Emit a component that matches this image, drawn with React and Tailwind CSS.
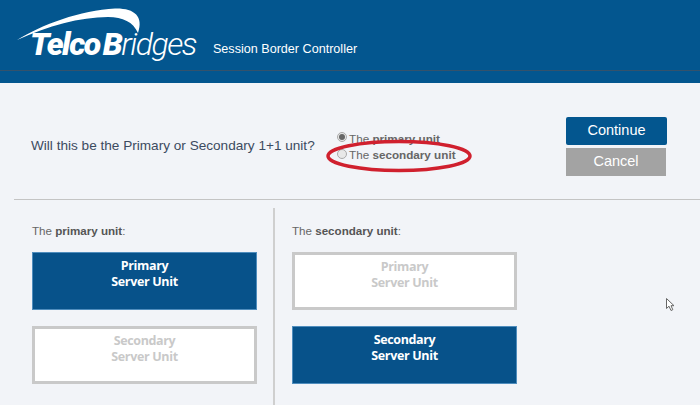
function ServerUnit({ top, bottom, active }) {
  return (
    <div
      className={`h-[58px] w-[225px] flex flex-col items-center text-[12.5px] leading-[16px] tracking-[-0.35px] font-bold font-['Open_Sans',sans-serif] ${
        active
          ? 'pt-[5px] bg-[#07528a] border border-[#4f8dbd] text-white'
          : 'pt-[4px] bg-white border-[3px] border-[#c9c9c9] text-[#c9c9c9]'
      }`}
    >
      <span>{top}</span>
      <span>{bottom}</span>
    </div>
  )
}

function UnitColumn({ name, primaryActive }) {
  return (
    <div className="flex flex-col gap-[16px]">
      <p className="h-[28px] text-[11.6px] leading-[16px] pt-[7px] -mb-[8px] text-[#666]">
        The <b className="text-[#555]">{name} unit</b>:
      </p>
      <ServerUnit top="Primary" bottom="Server Unit" active={primaryActive} />
      <ServerUnit top="Secondary" bottom="Server Unit" active={!primaryActive} />
    </div>
  )
}

function Radio({ checked }) {
  return (
    <span
      className={`w-[10px] h-[10px] rounded-full border border-[#aaa] bg-[#e8e8e8] flex items-center justify-center shrink-0 ${
        checked ? '-translate-y-[2px]' : '-translate-y-[1px]'
      }`}
    >
      {checked && <span className="w-[6px] h-[6px] rounded-full bg-[#666]" />}
    </span>
  )
}

export default function App() {
  return (
    <div className="relative w-[700px] h-[405px] overflow-hidden bg-[#f2f4f8] font-['Liberation_Sans',sans-serif]">
      {/* Header */}
      <div className="h-[83px] bg-[#03568f]">
        <div className="relative h-[71px] border-b border-[#34526b] flex items-end pl-[30px] pb-[9px]">
          <svg className="absolute left-[16px] top-[8px]" width="130" height="36" viewBox="0 0 130 36">
            <path d="M1 32 C25 17 65 2 99 0.5 C118 0 128 8 122 25 C117 14 107 9 92 9 C64 9 32 18 1 32 Z" fill="#fff" />
          </svg>
          <span className="text-white text-[32px] leading-[34px] italic tracking-[-1.5px] font-['Roboto',sans-serif]">
            <b className="font-black">Telco</b>
            <b className="font-black ml-[3px]">B</b>
            <span className="font-light">ridges</span>
          </span>
          <span className="ml-[17px] mb-[4px] text-white text-[12.6px] leading-[16px]">Session Border Controller</span>
        </div>
      </div>

      {/* Question */}
      <div className="h-[117px] ml-[14px] border-b border-[#c4c4c4] flex">
        <p className="w-[309px] pl-[17px] pt-[55px] text-[13.6px] leading-[16px] text-[#3c4b60]">
          Will this be the Primary or Secondary 1+1 unit?
        </p>
        <div className="w-[243px] pl-[14px] pt-[48px] text-[11.7px] leading-[16px] text-[#666] flex flex-col">
          <label className="flex items-center gap-[2px]">
            <Radio checked />
            <span>The <b>primary unit</b></span>
          </label>
          <label className="flex items-center gap-[2px]">
            <Radio />
            <span>The <b>secondary unit</b></span>
          </label>
        </div>
        <div className="pt-[34px] flex flex-col gap-[3px]">
          <button className="w-[101px] h-[28px] bg-[#03568f] rounded-[2px] text-white text-[14.5px]">Continue</button>
          <button className="w-[100px] h-[28px] bg-[#a3a3a3] text-white text-[14.5px]">Cancel</button>
        </div>
      </div>

      {/* Units */}
      <div className="flex ml-[14px] mt-[8px] h-[197px]">
        <div className="w-[259px] pl-[18px] pt-[8px]">
          <UnitColumn name="primary" primaryActive />
        </div>
        <div className="border-l-2 border-[#cfcfcf] pl-[17px] pt-[8px]">
          <UnitColumn name="secondary" primaryActive={false} />
        </div>
      </div>

      {/* Red annotation */}
      <svg className="absolute left-[325px] top-[139px]" width="148" height="34" viewBox="0 0 148 34">
        <ellipse cx="74" cy="17" rx="71" ry="14.5" fill="none" stroke="#d0202e" strokeWidth="3.5" />
      </svg>

      {/* Mouse cursor */}
      <svg className="absolute left-[665px] top-[297px]" width="11" height="15" viewBox="0 0 11 15">
        <path d="M1.5 1.5 V11.5 L4 9.2 L6 13.5 L7.8 12.7 L6 8.7 H9 Z" fill="#fff" stroke="#666" strokeWidth="1" />
      </svg>
    </div>
  )
}
